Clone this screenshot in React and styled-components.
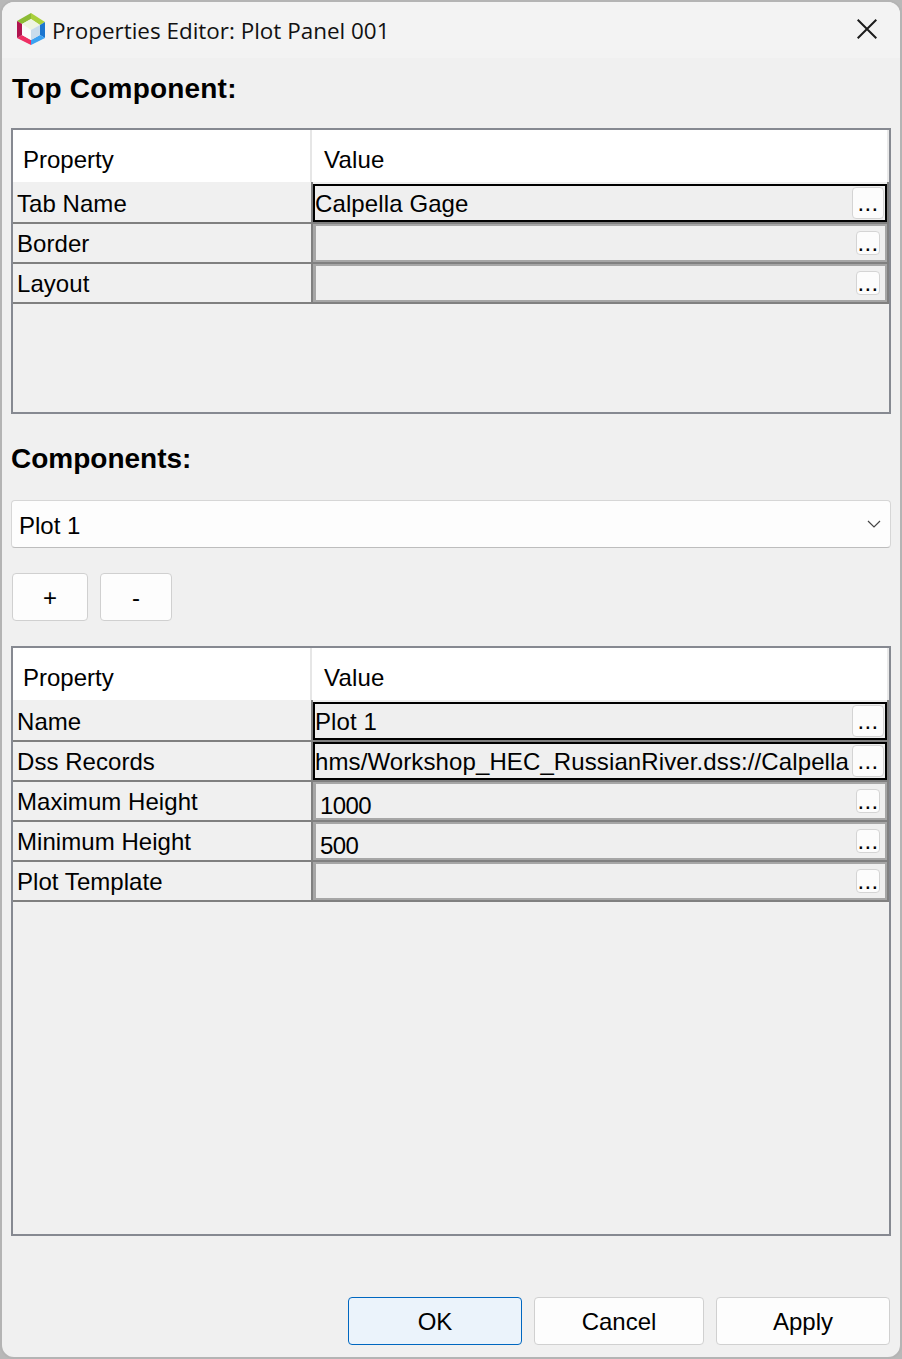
import React from "react";
import styled, { createGlobalStyle } from "styled-components";

const GlobalStyle = createGlobalStyle`
  html, body {
    margin: 0;
    padding: 0;
    background: #b8b8b8;
  }
  * {
    box-sizing: border-box;
  }
`;

const Window = styled.div`
  width: 902px;
  height: 1359px;
  display: flex;
  flex-direction: column;
  background: #f0f0f0;
  border: 2px solid #b4b4b4;
  border-radius: 14px;
  overflow: hidden;
  color: #000;
  font-family: "Liberation Sans", Arial, sans-serif;
  font-size: 24px;
`;

const TitleBar = styled.div`
  height: 56px;
  flex: none;
  display: flex;
  align-items: center;
  padding: 0 14px;
  background: #f3f3f3;
`;

const LogoWrap = styled.div`
  display: flex;
  margin-bottom: 2px;
`;

const TitleText = styled.span`
  margin-left: 6px;
  font-family: "Open Sans", sans-serif;
  font-size: 22.45px;
  color: #111;
  white-space: nowrap;
`;

const CloseButton = styled.button`
  margin: 0 9px 2px auto;
  width: 20px;
  height: 20px;
  padding: 0;
  border: 0;
  background: none;
  display: flex;
`;

const Content = styled.div`
  flex: 1;
  display: flex;
  flex-direction: column;
  padding: 0 9px 12px;
`;

const SectionTitle = styled.h2`
  margin: ${(p) => p.$top}px 0 ${(p) => p.$bottom}px;
  padding-left: ${(p) => p.$indent}px;
  height: 60px;
  line-height: 60px;
  font-size: 28px;
  font-weight: 700;
  letter-spacing: ${(p) => p.$tracking || 0}px;
`;

const PropertyPanel = styled.div`
  height: ${(p) => p.$height}px;
  flex: none;
  border: 2px solid #868991;
`;

const HeaderRow = styled.div`
  height: 52px;
  display: grid;
  grid-template-columns: 297px 577px 2px;
  background: #fff;
`;

const HeaderCell = styled.div`
  display: flex;
  align-items: center;
  padding: 8px 0 0 10px;
  & + & {
    padding-left: 12px;
    letter-spacing: 0.2px;
    border-left: 2px solid #e6e6e6;
  }
`;

const HeaderEnd = styled.div`
  background: #e9e9e9;
`;

const Row = styled.div`
  height: ${(p) => (p.$first ? 42 : 40)}px;
  display: grid;
  grid-template-columns: 300px 574px;
  border-bottom: 2px solid #808080;
  border-right: 2px solid #808080;
`;

const NameCell = styled.div`
  display: flex;
  align-items: center;
  padding: ${(p) => (p.$first ? 3 : 1)}px 0 0 4px;
  border-right: 2px solid #808080;
  letter-spacing: 0.05px;
`;

const ValueBox = styled.div`
  display: flex;
  align-items: ${(p) => (p.$focus ? "center" : "flex-start")};
  margin-top: ${(p) => (p.$first ? 2 : 0)}px;
  border: 2px solid ${(p) => (p.$focus ? "#000" : "#a6a6a6")};
  border-left-width: ${(p) => (p.$focus ? 2 : 3)}px;
  background: #efefef;
  overflow: hidden;
`;

const ValueText = styled.span`
  flex: 1;
  min-width: 0;
  white-space: nowrap;
  overflow: hidden;
  padding-left: ${(p) => (p.$focus ? 0 : 4)}px;
  padding-top: ${(p) => (p.$focus ? 2 : 8)}px;
  line-height: 28px;
  letter-spacing: ${(p) => (p.$focus ? 0.11 : -0.6)}px;
`;

const DotsButton = styled.button`
  flex: none;
  width: ${(p) => (p.$focus ? 32 : 24)}px;
  height: ${(p) => (p.$focus ? 32 : 24)}px;
  margin: ${(p) => (p.$focus ? "0 1px 0 3px" : "5px 5px 0 0")};
  padding: 0;
  border: 1px solid #d4d4d4;
  border-radius: 4px;
  background: #fcfcfc;
  color: #000;
  font-family: inherit;
  font-size: 24px;
  letter-spacing: 0.4px;
  line-height: ${(p) => (p.$focus ? 30 : 22)}px;
  text-align: center;
`;

const Select = styled.div`
  height: 48px;
  flex: none;
  display: flex;
  align-items: center;
  justify-content: space-between;
  padding: 4px 9px 0 7px;
  background: #fdfdfd;
  border: 1px solid #d6d6d6;
  border-bottom-color: #bdbdbd;
  border-radius: 4px;
`;

const SelectArrow = styled.span`
  display: flex;
  margin-top: -4px;
`;

const ButtonBar = styled.div`
  display: flex;
  gap: 12px;
  margin: 25px 0;
  padding-left: 1px;
`;

const PushButton = styled.button`
  width: ${(p) => p.$width}px;
  height: 48px;
  padding: 2px 0 0;
  border: 1px solid ${(p) => (p.$primary ? "#0067c0" : "#d0d0d0")};
  border-radius: 4px;
  background: ${(p) => (p.$primary ? "#ebf3fb" : "#fdfdfd")};
  color: #000;
  font-family: inherit;
  font-size: 24px;
`;

const Footer = styled.div`
  margin-top: auto;
  display: flex;
  justify-content: flex-end;
  gap: 12px;
  padding-right: 1px;
`;

const Logo = () => (
  <svg width="30" height="33" viewBox="0 0 30 33">
    <polygon points="15,0 15,6 6,11 1,8" fill="#8cbb35" />
    <polygon points="15,0 29,9 24,12 15,6" fill="#a9d03c" />
    <polygon points="29,9 29,25 24,22 24,12" fill="#1a75cf" />
    <polygon points="29,25 15,32 15,27 24,22" fill="#3ba2f2" />
    <polygon points="15,32 1,25 6,22 15,27" fill="#ef2f64" />
    <polygon points="1,25 1,8 6,11 6,22" fill="#b0144f" />
    <polygon points="15,6 24,12 15,17 6,11" fill="#eef5e1" />
    <polygon points="6,11 15,17 15,27 6,22" fill="#fafafa" />
    <polygon points="24,12 15,17 15,27 24,22" fill="#c8dcec" />
  </svg>
);

const CloseIcon = () => (
  <svg width="20" height="20" viewBox="0 0 20 20">
    <path d="M0.7 0.7 L19.3 19.3 M19.3 0.7 L0.7 19.3" stroke="#1c1c1c" strokeWidth="2" fill="none" />
  </svg>
);

const Chevron = () => (
  <svg width="14" height="8" viewBox="0 0 14 8">
    <path d="M1 1 L7 7 L13 1" stroke="#444" strokeWidth="1.2" fill="none" />
  </svg>
);

const PropertyRow = ({ name, value, focus, first }) => (
  <Row $first={first}>
    <NameCell $first={first}>{name}</NameCell>
    <ValueBox $focus={focus} $first={first}>
      <ValueText $focus={focus}>{value}</ValueText>
      <DotsButton $focus={focus}>...</DotsButton>
    </ValueBox>
  </Row>
);

const PropertyTable = ({ height, rows }) => (
  <PropertyPanel $height={height}>
    <HeaderRow>
      <HeaderCell>Property</HeaderCell>
      <HeaderCell>Value</HeaderCell>
      <HeaderEnd />
    </HeaderRow>
    {rows.map((row, i) => (
      <PropertyRow key={row.name} first={i === 0} {...row} />
    ))}
  </PropertyPanel>
);

const topRows = [
  { name: "Tab Name", value: "Calpella Gage", focus: true },
  { name: "Border", value: "" },
  { name: "Layout", value: "" },
];

const plotRows = [
  { name: "Name", value: "Plot 1", focus: true },
  { name: "Dss Records", value: "hms/Workshop_HEC_RussianRiver.dss://Calpella", focus: true },
  { name: "Maximum Height", value: "1000" },
  { name: "Minimum Height", value: "500" },
  { name: "Plot Template", value: "" },
];

export default function App() {
  return (
    <>
      <GlobalStyle />
      <Window>
        <TitleBar>
          <LogoWrap>
            <Logo />
          </LogoWrap>
          <TitleText>Properties Editor: Plot Panel 001</TitleText>
          <CloseButton>
            <CloseIcon />
          </CloseButton>
        </TitleBar>
        <Content>
          <SectionTitle $top={1} $bottom={9} $indent={1} $tracking={0.2}>
            Top Component:
          </SectionTitle>
          <PropertyTable height={286} rows={topRows} />
          <SectionTitle $top={15} $bottom={11} $indent={0}>
            Components:
          </SectionTitle>
          <Select>
            <span>Plot 1</span>
            <SelectArrow>
              <Chevron />
            </SelectArrow>
          </Select>
          <ButtonBar>
            <PushButton $width={76}>+</PushButton>
            <PushButton $width={72}>-</PushButton>
          </ButtonBar>
          <PropertyTable height={590} rows={plotRows} />
          <Footer>
            <PushButton $width={174} $primary>
              OK
            </PushButton>
            <PushButton $width={170}>Cancel</PushButton>
            <PushButton $width={174}>Apply</PushButton>
          </Footer>
        </Content>
      </Window>
    </>
  );
}
